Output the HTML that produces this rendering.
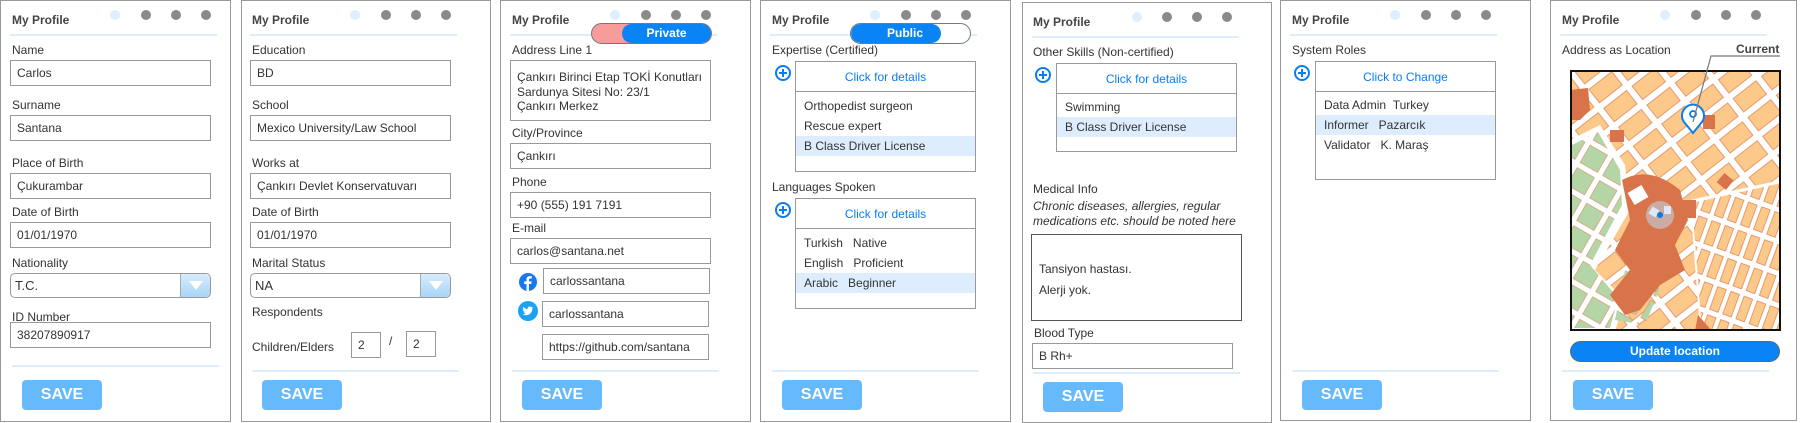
<!DOCTYPE html>
<html><head><meta charset="utf-8"><style>
*{margin:0;padding:0;box-sizing:border-box}
body{width:1801px;height:423px;background:#fff;position:relative;overflow:hidden;font-family:"Liberation Sans",Arial,sans-serif;color:#333}
.a{position:absolute;white-space:nowrap}
.p{position:absolute;border:1px solid #999;background:#fff}
.t{font-weight:bold;font-size:12px;color:#444}
.d{position:absolute;width:10px;height:10px;border-radius:50%;background:#8a8a8a}
.d.l{background:#ddeeff}
.s{position:absolute;height:2px;background:#deedfd}
.l{font-size:12px;color:#333}
.in{position:absolute;border:1px solid #999;font-size:12px;line-height:24px;padding-left:6px;height:26px;color:#333;white-space:nowrap;overflow:hidden;background:#fff}
.sel{position:absolute;border:1px solid #999;border-radius:5px;height:25px;font-size:13px;line-height:23px;padding-left:4px;overflow:hidden}
.sel b{position:absolute;right:0;top:0;width:30px;height:23px;background:linear-gradient(#d7ecfd,#a9d4f8);border-left:1px solid #aaa}
.sel b:after{content:"";position:absolute;left:8px;top:7px;border-left:7px solid transparent;border-right:7px solid transparent;border-top:9px solid #fff}
.sv{position:absolute;width:80px;height:30px;background:#66b9fa;border-radius:4px;color:#fff;font-weight:bold;font-size:16px;text-align:center;line-height:30px}
.box{position:absolute;border:1px solid #999;background:#fff}
.hd{height:30px;border-bottom:1px solid #999;color:#0a7ef0;font-size:12px;text-align:center;line-height:30px}
.r{height:20px;font-size:12px;line-height:20px;padding-left:8px;white-space:nowrap}
.hl{background:#ddedfd}
.plus{position:absolute;width:16px;height:16px;border:2px solid #0a7ef0;border-radius:50%}
.plus:before{content:"";position:absolute;left:2px;top:5px;width:8px;height:2px;background:#0a7ef0}
.plus:after{content:"";position:absolute;left:5px;top:2px;width:2px;height:8px;background:#0a7ef0}
</style></head><body>

<!-- Panel 1 -->
<div class="p" style="left:0;top:0;width:231px;height:422px"></div>
<div class="a t" style="left:12px;top:13px">My Profile</div>
<div class="d l" style="left:110px;top:10px"></div><div class="d" style="left:141px;top:10px"></div><div class="d" style="left:171px;top:10px"></div><div class="d" style="left:201px;top:10px"></div>
<div class="s" style="left:10px;top:34px;width:207px"></div>
<div class="a l" style="left:12px;top:43px">Name</div>
<div class="in" style="left:10px;top:60px;width:201px">Carlos</div>
<div class="a l" style="left:12px;top:98px">Surname</div>
<div class="in" style="left:10px;top:115px;width:201px">Santana</div>
<div class="a l" style="left:12px;top:156px">Place of Birth</div>
<div class="in" style="left:10px;top:173px;width:201px">Çukurambar</div>
<div class="a l" style="left:12px;top:205px">Date of Birth</div>
<div class="in" style="left:10px;top:222px;width:201px">01/01/1970</div>
<div class="a l" style="left:12px;top:256px">Nationality</div>
<div class="sel" style="left:10px;top:273px;width:201px">T.C.<b></b></div>
<div class="a l" style="left:12px;top:310px">ID Number</div>
<div class="in" style="left:10px;top:322px;width:201px">38207890917</div>
<div class="s" style="left:12px;top:365px;width:207px"></div>
<div class="sv" style="left:22px;top:380px">SAVE</div>

<!-- Panel 2 -->
<div class="p" style="left:241px;top:0;width:250px;height:422px"></div>
<div class="a t" style="left:252px;top:13px">My Profile</div>
<div class="d l" style="left:350px;top:10px"></div><div class="d" style="left:381px;top:10px"></div><div class="d" style="left:411px;top:10px"></div><div class="d" style="left:441px;top:10px"></div>
<div class="s" style="left:250px;top:34px;width:207px"></div>
<div class="a l" style="left:252px;top:43px">Education</div>
<div class="in" style="left:250px;top:60px;width:201px">BD</div>
<div class="a l" style="left:252px;top:98px">School</div>
<div class="in" style="left:250px;top:115px;width:201px">Mexico University/Law School</div>
<div class="a l" style="left:252px;top:156px">Works at</div>
<div class="in" style="left:250px;top:173px;width:201px">Çankırı Devlet Konservatuvarı</div>
<div class="a l" style="left:252px;top:205px">Date of Birth</div>
<div class="in" style="left:250px;top:222px;width:201px">01/01/1970</div>
<div class="a l" style="left:252px;top:256px">Marital Status</div>
<div class="sel" style="left:250px;top:273px;width:201px">NA<b></b></div>
<div class="a l" style="left:252px;top:305px">Respondents</div>
<div class="a l" style="left:252px;top:340px">Children/Elders</div>
<div class="in" style="left:351px;top:332px;width:30px">2</div>
<div class="a l" style="left:389px;top:334px">/</div>
<div class="in" style="left:406px;top:331px;width:30px">2</div>
<div class="s" style="left:252px;top:370px;width:207px"></div>
<div class="sv" style="left:262px;top:380px">SAVE</div>

<!-- Panel 3 -->
<div class="p" style="left:500px;top:0;width:251px;height:422px"></div>
<div class="a t" style="left:512px;top:13px">My Profile</div>
<div class="d l" style="left:610px;top:10px"></div><div class="d" style="left:641px;top:10px"></div><div class="d" style="left:671px;top:10px"></div><div class="d" style="left:701px;top:10px"></div>
<div class="s" style="left:510px;top:34px;width:207px"></div>
<div class="a" style="left:591px;top:23px;width:121px;height:21px;border-radius:11px;background:#f79b9b;border:1px solid #777;overflow:hidden"><div style="position:absolute;left:30px;top:0;right:0;height:19px;border-radius:10px;background:#0a84f5;color:#fff;font-weight:bold;font-size:12px;text-align:center;line-height:19px">Private</div></div>
<div class="a l" style="left:512px;top:43px">Address Line 1</div>
<div class="box" style="left:510px;top:60px;width:201px;height:61px;font-size:12px;line-height:14.5px;padding:9px 0 0 6px;white-space:nowrap">Çankırı Birinci Etap TOKİ Konutları<br>Sardunya Sitesi No: 23/1<br>Çankırı Merkez</div>
<div class="a l" style="left:512px;top:126px">City/Province</div>
<div class="in" style="left:510px;top:143px;width:201px">Çankırı</div>
<div class="a l" style="left:512px;top:175px">Phone</div>
<div class="in" style="left:510px;top:192px;width:201px">+90 (555) 191 7191</div>
<div class="a l" style="left:512px;top:221px">E-mail</div>
<div class="in" style="left:510px;top:238px;width:201px">carlos@santana.net</div>
<svg class="a" style="left:519px;top:273px" width="18" height="18" viewBox="0 0 18 18"><circle cx="9" cy="9" r="9" fill="#1877f2"/><path d="M10 18V11h2.3l.4-2.6H10V6.8c0-.8.3-1.3 1.4-1.3h1.4V3.2c-.3 0-1.1-.1-2-.1-2 0-3.3 1.2-3.3 3.4v1.9H5.2V11h2.3v7z" fill="#fff"/></svg>
<div class="in" style="left:543px;top:268px;width:167px">carlossantana</div>
<svg class="a" style="left:518px;top:301px" width="20" height="20" viewBox="0 0 20 20"><circle cx="10" cy="10" r="10" fill="#1da1f2"/><path d="M15 6.5c-.4.2-.8.3-1.2.3.4-.3.8-.7.9-1.1-.4.2-.9.4-1.3.5-.4-.4-1-.7-1.6-.7-1.2 0-2.2 1-2.2 2.2 0 .2 0 .3.1.5-1.8-.1-3.4-1-4.5-2.3-.2.3-.3.7-.3 1.1 0 .8.4 1.4 1 1.8-.4 0-.7-.1-1-.3 0 1.1.8 2 1.8 2.2-.3.1-.7.1-1 0 .3.9 1.100 1.500 2.100 1.500-.8.6-1.7 1-2.8 1H4.6c1 .6 2.2 1 3.4 1 4.1 0 6.3-3.4 6.3-6.3v-.3c.3-.3.6-.7.7-1.1z" fill="#fff"/></svg>
<div class="in" style="left:542px;top:301px;width:167px">carlossantana</div>
<div class="in" style="left:542px;top:334px;width:167px">https://github.com/santana</div>
<div class="s" style="left:512px;top:370px;width:207px"></div>
<div class="sv" style="left:522px;top:380px">SAVE</div>

<!-- Panel 4 -->
<div class="p" style="left:760px;top:0;width:251px;height:422px"></div>
<div class="a t" style="left:772px;top:13px">My Profile</div>
<div class="d l" style="left:870px;top:10px"></div><div class="d" style="left:901px;top:10px"></div><div class="d" style="left:931px;top:10px"></div><div class="d" style="left:961px;top:10px"></div>
<div class="s" style="left:770px;top:34px;width:207px"></div>
<div class="a" style="left:850px;top:23px;width:121px;height:21px;border-radius:11px;background:#fff;border:1px solid #777;overflow:hidden"><div style="position:absolute;left:0;top:0;width:90px;height:19px;border-radius:10px;background:#0a84f5;color:#fff;font-weight:bold;font-size:12px;text-align:center;line-height:19px;padding-left:18px">Public</div></div>
<div class="a l" style="left:772px;top:43px">Expertise (Certified)</div>
<div class="plus" style="left:775px;top:65px"></div>
<div class="box" style="left:795px;top:61px;width:181px;height:111px"><div class="hd">Click for details</div><div style="height:4px"></div><div class="r">Orthopedist surgeon</div><div class="r">Rescue expert</div><div class="r hl">B Class Driver License</div></div>
<div class="a l" style="left:772px;top:180px">Languages Spoken</div>
<div class="plus" style="left:775px;top:202px"></div>
<div class="box" style="left:795px;top:198px;width:181px;height:111px"><div class="hd">Click for details</div><div style="height:4px"></div><div class="r">Turkish &nbsp; Native</div><div class="r">English &nbsp; Proficient</div><div class="r hl">Arabic &nbsp; Beginner</div></div>
<div class="s" style="left:772px;top:370px;width:207px"></div>
<div class="sv" style="left:782px;top:380px">SAVE</div>

<!-- Panel 5 -->
<div class="p" style="left:1022px;top:2px;width:250px;height:421px"></div>
<div class="a t" style="left:1033px;top:15px">My Profile</div>
<div class="d l" style="left:1132px;top:12px"></div><div class="d" style="left:1162px;top:12px"></div><div class="d" style="left:1192px;top:12px"></div><div class="d" style="left:1222px;top:12px"></div>
<div class="s" style="left:1032px;top:36px;width:207px"></div>
<div class="a l" style="left:1033px;top:45px">Other Skills (Non-certified)</div>
<div class="plus" style="left:1035px;top:67px"></div>
<div class="box" style="left:1056px;top:63px;width:181px;height:89px"><div class="hd">Click for details</div><div style="height:3px"></div><div class="r">Swimming</div><div class="r hl">B Class Driver License</div></div>
<div class="a l" style="left:1033px;top:182px">Medical Info</div>
<div class="a l" style="left:1033px;top:199px;font-style:italic;line-height:15px">Chronic diseases, allergies, regular<br>medications etc. should be noted here</div>
<div class="box" style="left:1031px;top:234px;width:211px;height:87px;border-color:#555;font-size:12px;line-height:21px;padding:24px 0 0 7px">Tansiyon hastası.<br>Alerji yok.</div>
<div class="a l" style="left:1034px;top:326px">Blood Type</div>
<div class="in" style="left:1032px;top:343px;width:201px">B Rh+</div>
<div class="s" style="left:1033px;top:372px;width:207px"></div>
<div class="sv" style="left:1043px;top:382px">SAVE</div>

<!-- Panel 6 -->
<div class="p" style="left:1280px;top:0;width:251px;height:421px"></div>
<div class="a t" style="left:1292px;top:13px">My Profile</div>
<div class="d l" style="left:1390px;top:10px"></div><div class="d" style="left:1421px;top:10px"></div><div class="d" style="left:1451px;top:10px"></div><div class="d" style="left:1481px;top:10px"></div>
<div class="s" style="left:1290px;top:34px;width:207px"></div>
<div class="a l" style="left:1292px;top:43px">System Roles</div>
<div class="plus" style="left:1294px;top:65px"></div>
<div class="box" style="left:1315px;top:61px;width:181px;height:119px"><div class="hd">Click to Change</div><div style="height:3px"></div><div class="r">Data Admin &nbsp;Turkey</div><div class="r hl">Informer &nbsp; Pazarcık</div><div class="r">Validator &nbsp; K. Maraş</div></div>
<div class="s" style="left:1292px;top:370px;width:207px"></div>
<div class="sv" style="left:1302px;top:380px">SAVE</div>

<!-- Panel 7 -->
<div class="p" style="left:1550px;top:0;width:247px;height:421px"></div>
<div class="a t" style="left:1562px;top:13px">My Profile</div>
<div class="d l" style="left:1660px;top:10px"></div><div class="d" style="left:1691px;top:10px"></div><div class="d" style="left:1721px;top:10px"></div><div class="d" style="left:1751px;top:10px"></div>
<div class="s" style="left:1560px;top:34px;width:207px"></div>
<div class="a l" style="left:1562px;top:43px">Address as Location</div>
<div class="a t" style="left:1736px;top:42px;font-size:12px">Current</div>
<svg class="a" style="left:1570px;top:70px" width="211" height="261" viewBox="0 0 211 261">
<defs>
<pattern id="b" width="36" height="24" patternUnits="userSpaceOnUse" patternTransform="rotate(-38)"><rect x="3" y="3" width="29" height="17" fill="#fdc98b" stroke="#e0895a" stroke-width=".8"/></pattern>
<pattern id="b2" width="14" height="30" patternUnits="userSpaceOnUse" patternTransform="rotate(20)"><rect x="3" y="3" width="9" height="24" fill="#fdc98b" stroke="#e0895a" stroke-width=".8"/></pattern>
<pattern id="g" width="26" height="26" patternUnits="userSpaceOnUse" patternTransform="rotate(30)"><rect x="3" y="3" width="20" height="20" fill="#b4d5a6" stroke="#d98a66" stroke-width=".6"/></pattern>
</defs>
<rect width="211" height="261" fill="#fff"/>
<rect width="211" height="261" fill="url(#b)"/>
<polygon points="120,130 211,110 211,261 130,261" fill="#fff"/>
<polygon points="122,133 211,113 211,261 132,261" fill="url(#b2)"/>
<polygon points="0,70 30,55 55,95 60,140 25,200 55,230 45,261 0,261" fill="#fff"/>
<polygon points="2,75 28,62 50,100 52,135 20,195 48,228 40,258 2,258" fill="url(#g)"/>
<polygon points="55,200 90,218 75,255 45,250" fill="url(#g)"/>
<path d="M0 20 L18 18 L20 40 L10 50 L0 50Z" fill="#d9734a"/>
<path d="M52 110 Q80 95 110 120 L118 150 L105 175 L115 200 L90 215 L70 240 L55 245 L40 225 L60 200 L45 180 L60 150Z" fill="#d9734a"/>
<rect x="60" y="118" width="16" height="14" fill="#fff" transform="rotate(-30 68 125)"/>
<rect x="110" y="130" width="16" height="18" fill="#d9734a"/>
<rect x="133" y="45" width="12" height="14" fill="#d9734a"/>
<rect x="40" y="60" width="14" height="12" fill="#d9734a"/>
<rect x="150" y="105" width="12" height="12" fill="#d9734a" transform="rotate(40 155 110)"/>
<polygon points="128,245 142,261 125,261" fill="#d9734a"/>
<circle cx="90" cy="145" r="14" fill="#c9b3ae" opacity=".9"/>
<rect x="80" y="138" width="8" height="8" fill="#dde9f8" transform="rotate(30 84 142)"/>
<rect x="94" y="136" width="7" height="8" fill="#dde9f8"/>
<circle cx="90" cy="145" r="3" fill="#0a7ae0"/>
<path d="M123 63 L114 52 A11 11 0 1 1 132 52 Z" fill="#fff" stroke="#0a7ef0" stroke-width="2"/>
<circle cx="123" cy="44" r="3" fill="#fff" stroke="#0a7ef0" stroke-width="1.8"/>
<rect x="1" y="1" width="209" height="259" fill="none" stroke="#111" stroke-width="2"/>
</svg>
<svg class="a" style="left:1690px;top:50px" width="100" height="80"><path d="M90 6 H21 L3 72" fill="none" stroke="#777" stroke-width="1.2"/></svg>
<div class="a" style="left:1570px;top:341px;width:210px;height:21px;border-radius:11px;background:#0a84f5;border:1px solid #666;color:#fff;font-weight:bold;font-size:12px;text-align:center;line-height:19px">Update location</div>
<div class="s" style="left:1562px;top:370px;width:207px"></div>
<div class="sv" style="left:1573px;top:380px">SAVE</div>

</body></html>
